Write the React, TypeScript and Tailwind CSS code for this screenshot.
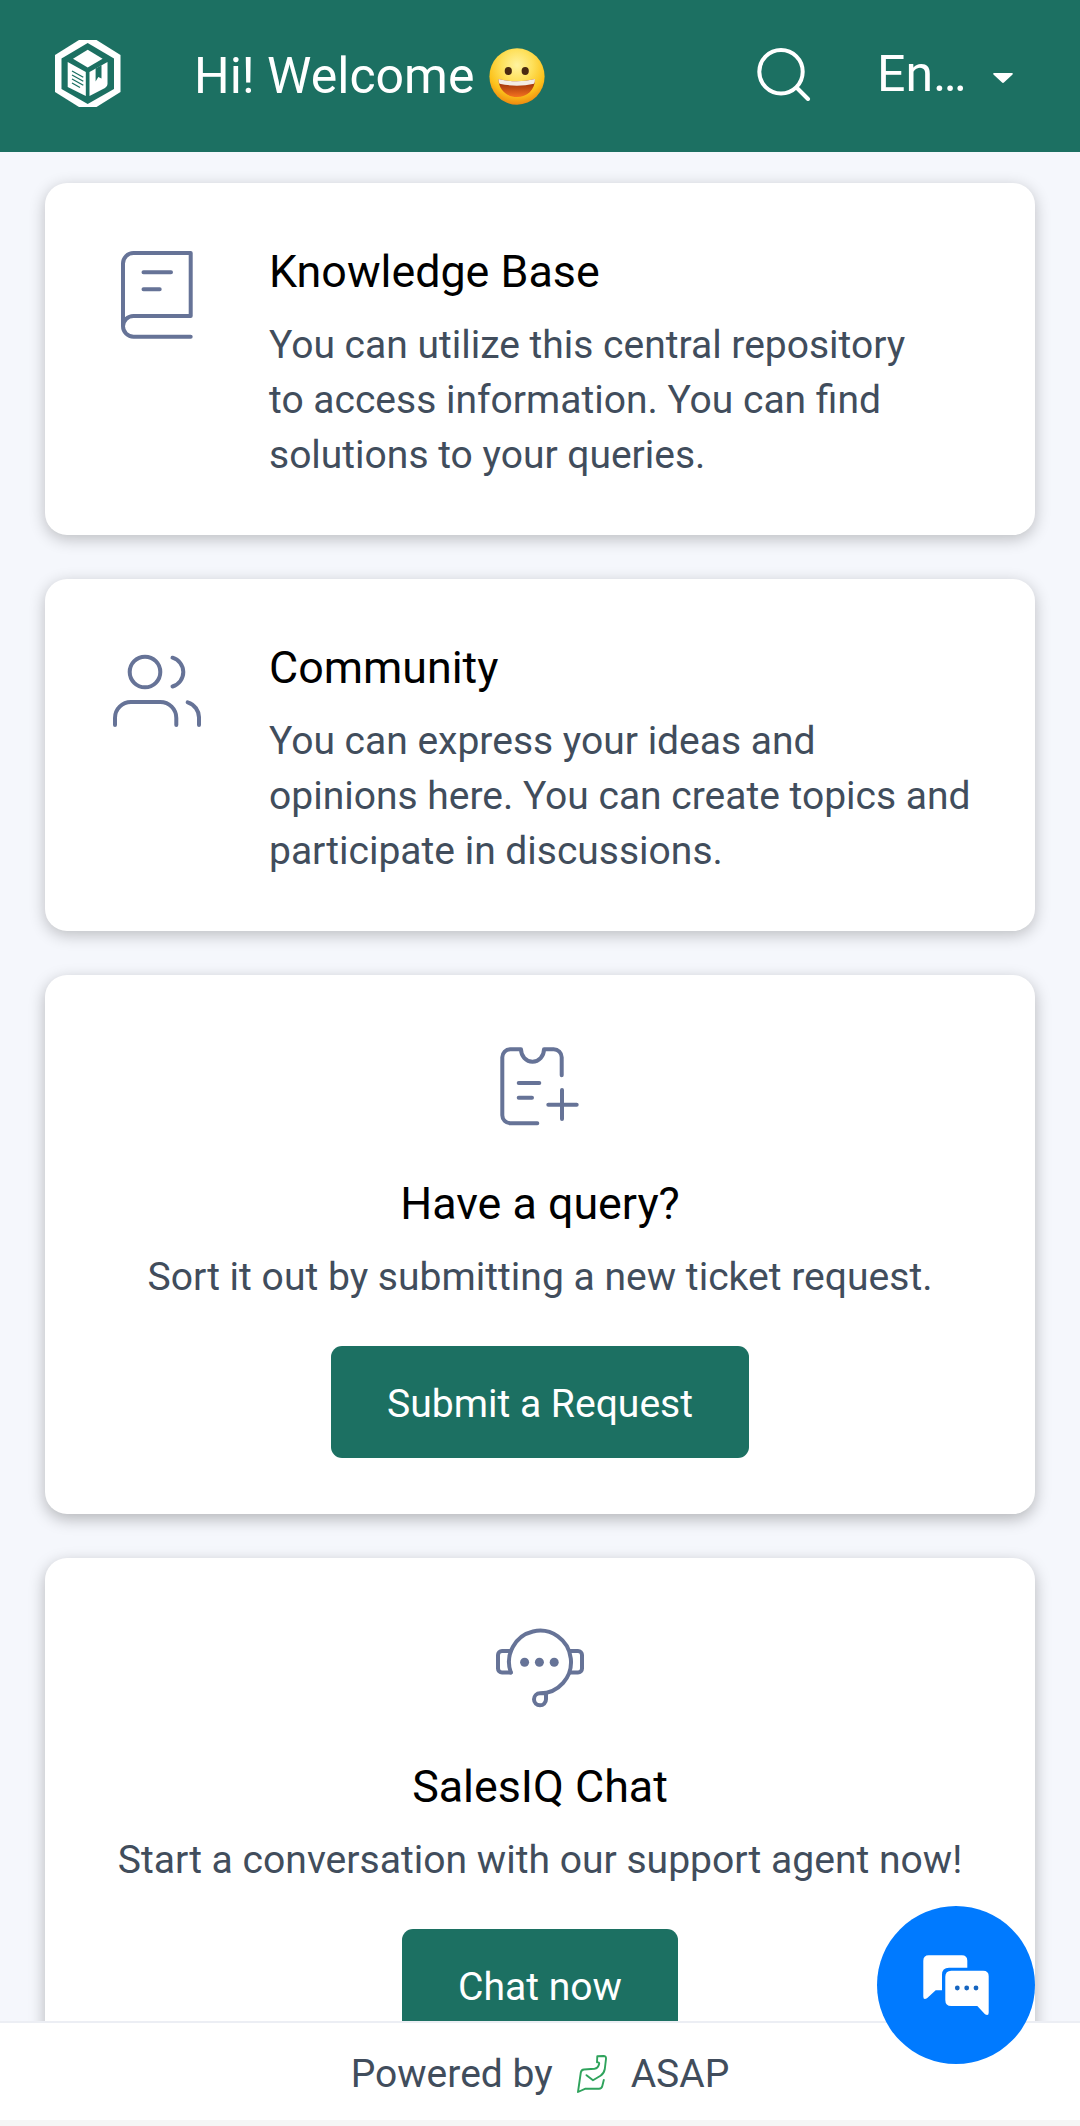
import type { ReactNode } from 'react';

interface TopicCardProps {
  icon: ReactNode;
  title: string;
  lines: string[];
}

interface ActionCardProps {
  icon: ReactNode;
  title: string;
  text: string;
  action: string;
}

function BrandLogo() {
  return (
    <svg viewBox="0 0 66 67" className="w-[66px] h-[67px] shrink-0">
      <path d="M24 0H41.5L65.5 15V52L41.5 67H24L0 52V15Z" fill="#fff" />
      <path d="M32.7 3L59 18.5V49L32.7 64L6.5 49V18.5Z" fill="#1c7062" />
      <path d="M32.7 9.7L47.6 18.7L32.7 27.5L18 18.7Z" fill="#fff" />
      <path d="M12.7 22L30.8 32V56L12.7 47Z" fill="#fff" />
      <path d="M34.5 32L52.5 22V44Q52.5 46.5 50 48L34.5 56Z" fill="#fff" />
      <path d="M40.6 28.5L46.5 25.3V38.5L43.3 37L40.6 41.5Z" fill="#1c7062" />
      <path d="M17 31L28.3 37.3M17 35L28.3 41.3M17 39L28.3 45.3M17 43L25 47.5" stroke="#1c7062" strokeWidth="1.3" />
    </svg>
  );
}

function GrinningFace() {
  return (
    <svg viewBox="0 0 56 57" className="w-[56px] h-[57px] shrink-0">
      <defs>
        <radialGradient id="face" cx="0.5" cy="0.3" r="0.7">
          <stop offset="0" stopColor="#fff3a0" />
          <stop offset="0.4" stopColor="#fee05a" />
          <stop offset="0.75" stopColor="#fcc21b" />
          <stop offset="1" stopColor="#ef8a10" />
        </radialGradient>
        <linearGradient id="mouth" x1="0" y1="0" x2="0" y2="1">
          <stop offset="0.3" stopColor="#a83a0c" />
          <stop offset="1" stopColor="#f4711f" />
        </linearGradient>
      </defs>
      <ellipse cx="28" cy="28.5" rx="27.6" ry="28.2" fill="url(#face)" />
      <ellipse cx="19.3" cy="23" rx="3.6" ry="4" fill="#4a2a10" />
      <ellipse cx="36.2" cy="23" rx="3.6" ry="4" fill="#4a2a10" />
      <path d="M9.5 31Q28 35.5 46 31C46 42 38 49 28 49S9.5 42 9.5 31Z" fill="url(#mouth)" />
      <path d="M9.5 31Q28 35.5 46 31Q46 34 45 35.8Q28 39.5 10.5 35.8Q9.5 34 9.5 31Z" fill="#f3ece4" />
    </svg>
  );
}

const iconClass = 'w-[88px] h-[88px] shrink-0 fill-none stroke-[#667397] stroke-4';

function BookIcon() {
  return (
    <svg viewBox="0 0 88 88" className={iconClass} strokeLinecap="round" strokeLinejoin="round">
      <path d="M77.7 85.7H20.5A10.5 10.35 0 0 1 20.5 65H77.7V2H20.5A10.5 10.5 0 0 0 10 12.5V75.3" />
      <path d="M30.5 21.3H58M30.5 38.3H46.7" />
    </svg>
  );
}

function PeopleIcon() {
  return (
    <svg viewBox="0 0 88 88" className={iconClass} strokeLinecap="round">
      <circle cx="32" cy="25" r="15.3" />
      <path d="M59.5 10.7A15 15 0 0 1 59.5 39.5" />
      <path d="M2 78V71A16 16 0 0 1 18 55H47.3A16 16 0 0 1 63.3 71V78" />
      <path d="M74.7 55.3A16 16 0 0 1 86 71V78" />
    </svg>
  );
}

function TicketIcon() {
  return (
    <svg viewBox="0 0 88 88" className={iconClass} strokeLinecap="round" strokeLinejoin="round">
      <path d="M41.3 80.3H14.3A8 8 0 0 1 6.3 72.3V14.3A8 8 0 0 1 14.3 6.3H25A11.5 12.4 0 0 0 48 6.3H57.7A8 8 0 0 1 65.7 14.3V32.3" />
      <path d="M22.7 40H43.3M22.7 54.7H36M52.3 61.7H80.7M66 47V76" />
    </svg>
  );
}

function HeadsetIcon() {
  return (
    <svg viewBox="0 0 88 88" className={iconClass} strokeLinecap="round" strokeLinejoin="round">
      <path d="M14.8 46.5A31 31.3 0 1 1 44 67.3A6 6 0 1 0 50 73.3V67" />
      <path d="M14.3 25H6A4 4 0 0 0 2 29V42.5A4 4 0 0 0 6 46.5H14.8M74 25H82A4 4 0 0 1 86 29V42.5A4 4 0 0 1 82 46.5H74" />
      <g className="fill-[#667397] stroke-none">
        <circle cx="28.6" cy="36.2" r="4.5" />
        <circle cx="43.4" cy="36.2" r="4.5" />
        <circle cx="58.2" cy="36.2" r="4.5" />
      </g>
    </svg>
  );
}

function AsapLogo() {
  return (
    <svg viewBox="0 0 30 38" className="w-[30px] h-[38px] fill-none stroke-[#2fa35c] stroke-[1.9]" strokeLinecap="round" strokeLinejoin="round">
      <path d="M26.8 25L25.3 31Q24.7 33.7 22 33.7H8.5L1 37L3.8 17.5Q4.3 14.7 7 14.5L17.5 13.8Q21.3 13.3 22.2 8.5Q22.3 7.2 20 7.2L20.3 1.3L26.5 1Q29.2 1 29 3.8L27.8 14Q27 18.5 23.5 20.7L16 25.2L9.5 20.2" />
    </svg>
  );
}

function TopicCard({ icon, title, lines }: TopicCardProps) {
  return (
    <section className="flex h-[352px] shrink-0 gap-[68px] rounded-[22px] bg-white pl-[68px] pt-[68px] shadow-[0_4px_16px_rgba(0,0,0,0.24)]">
      {icon}
      <div className="-mt-[7px]">
        <h2 className="text-[44.8px] leading-[56px] text-black">{title}</h2>
        <p className="mt-[18px] text-[39px] leading-[55px] whitespace-nowrap">
          {lines.map((line) => (
            <span key={line} className="block">{line}</span>
          ))}
        </p>
      </div>
    </section>
  );
}

function ActionCard({ icon, title, text, action }: ActionCardProps) {
  return (
    <section className="flex h-[539px] shrink-0 flex-col items-center rounded-[22px] bg-white pt-[68px] shadow-[0_5px_16px_rgba(0,0,0,0.27)]">
      {icon}
      <h2 className="mt-[45px] text-[44.8px] leading-[56px] text-black">{title}</h2>
      <p className="mt-[18px] text-[39.1px] leading-[55px] whitespace-nowrap">{text}</p>
      <button className="mt-[41px] h-[112px] rounded-[11px] bg-[#1c7062] px-[56px] pt-[4px] text-[39.1px] text-white">
        {action}
      </button>
    </section>
  );
}

function App() {
  return (
    <div className="relative flex h-[2126px] w-[1080px] flex-col overflow-hidden bg-[#f5f7fc] font-[Roboto,sans-serif] text-[#414d5c]">
      <header className="flex h-[152px] shrink-0 items-start bg-[#1c7062] pl-[55px] pt-[40px] text-[50px] leading-[70px] text-white">
        <BrandLogo />
        <h1 className="ml-[73px] w-[295px] pt-px whitespace-nowrap">Hi! Welcome</h1>
        <div className="mt-[8px]">
          <GrinningFace />
        </div>
        <svg viewBox="0 0 56 56" className="ml-[210px] mt-[5px] h-[56px] w-[56px] shrink-0 fill-none stroke-white stroke-4" strokeLinecap="round">
          <circle cx="26" cy="26.7" r="21.7" />
          <path d="M42 43L53 54" />
        </svg>
        <button className="ml-[66px] -mt-px flex items-center">
          En…
          <svg viewBox="0 0 20 10" className="ml-[27px] mt-[7px] h-[10px] w-[20px] fill-white">
            <path d="M1 0H19Q20.5 0.5 19.3 1.7L11.2 9.3Q10 10.5 8.8 9.3L0.7 1.7Q-0.5 0.5 1 0Z" />
          </svg>
        </button>
      </header>

      <main className="flex min-h-0 flex-1 flex-col gap-[44px] overflow-hidden px-[45px] pt-[31px]">
        <TopicCard
          icon={<BookIcon />}
          title="Knowledge Base"
          lines={['You can utilize this central repository', 'to access information. You can find', 'solutions to your queries.']}
        />
        <TopicCard
          icon={<PeopleIcon />}
          title="Community"
          lines={['You can express your ideas and', 'opinions here. You can create topics and', 'participate in discussions.']}
        />
        <ActionCard
          icon={<TicketIcon />}
          title="Have a query?"
          text="Sort it out by submitting a new ticket request."
          action="Submit a Request"
        />
        <ActionCard
          icon={<HeadsetIcon />}
          title="SalesIQ Chat"
          text="Start a conversation with our support agent now!"
          action="Chat now"
        />
      </main>

      <footer className="flex h-[105px] shrink-0 items-center justify-center border-t-2 border-b-[6px] border-t-[#eceef4] border-b-[#f5f5f5] bg-white pt-[5px] text-[39px]">
        <span>Powered by</span>
        <span className="mx-[24px]">
          <AsapLogo />
        </span>
        <span>ASAP</span>
      </footer>

      <button aria-label="Open chat" className="absolute right-[45px] bottom-[62px] h-[158px] w-[158px] rounded-full bg-[#007aff]">
        <svg viewBox="0 0 158 158" className="fill-white">
          <path d="M51.8 49.3H84.8Q90.3 49.3 90.3 54.8V61.7H72Q65 61.7 65 68.7V84.3H58.7L50 92.3Q46.3 94.5 46.3 90.5V54.8Q46.3 49.3 51.8 49.3Z" />
          <path d="M74.3 64.7H106.2Q111.7 64.7 111.7 70.2V106.5Q111.7 110.5 108 108.3L100.3 100H74.3Q68.3 100 68.3 94V70.7Q68.3 64.7 74.3 64.7Z" />
          <g className="fill-[#1565c0]">
            <circle cx="80.3" cy="82" r="2.4" />
            <circle cx="89.7" cy="82" r="2.4" />
            <circle cx="99" cy="82" r="2.4" />
          </g>
        </svg>
      </button>
    </div>
  );
}

export default App;
